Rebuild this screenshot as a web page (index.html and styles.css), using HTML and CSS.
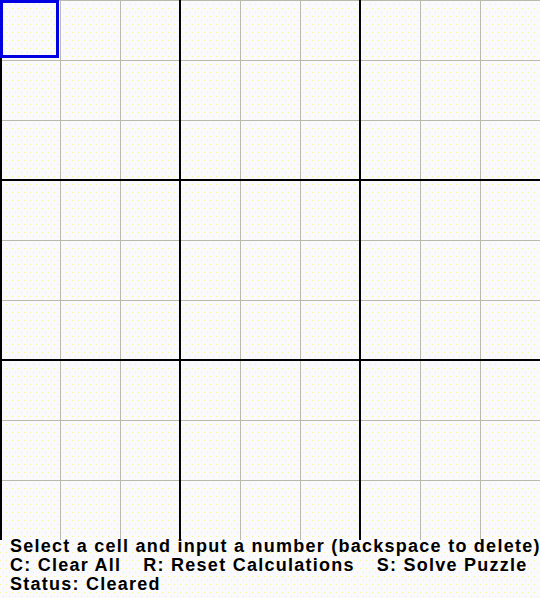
FILE: index.html
```html
<!DOCTYPE html>
<html>
<head>
<meta charset="utf-8">
<link rel="stylesheet" href="styles.css">
</head>
<body>
<div class="app">
  <div class="board">
    <div class="cell selected"></div>
  </div>
  <div class="info">
    <div class="line">Select a cell and input a number (backspace to delete)</div>
    <div class="line keys"><span>C: Clear All</span><span>R: Reset Calculations</span><span>S: Solve Puzzle</span></div>
    <div class="line">Status: Cleared</div>
  </div>
</div>
</body>
</html>
```
FILE: styles.css
```css
html, body {
  margin: 0;
  padding: 0;
}
body {
  width: 540px;
  height: 598px;
  overflow: hidden;
  background-color: #fafafd;
  background-image:
    conic-gradient(from 90deg at 1px 1px, transparent 0 50%, #f5f59a 50% 75%, transparent 75%),
    conic-gradient(from 90deg at 1px 1px, transparent 0 50%, #f5f59a 50% 75%, transparent 75%);
  background-size: 6px 8px, 6px 8px;
  background-position: 0 0, 3px 4px;
  font-family: "Liberation Sans", Arial, sans-serif;
}
.app {
  display: flex;
  flex-direction: column;
}
.board {
  width: 540px;
  height: 540px;
  display: grid;
  grid-template-columns: repeat(9, 60px);
  grid-template-rows: repeat(9, 60px);
  background-image:
    linear-gradient(to right, #000 0 2px, transparent 2px 179px, #000 179px 181px, transparent 181px 359px, #000 359px 361px, transparent 361px),
    linear-gradient(to bottom, transparent 0 179px, #000 179px 181px, transparent 181px 359px, #000 359px 361px, transparent 361px),
    linear-gradient(to right, #b9b9ac 1px, transparent 1px),
    linear-gradient(to bottom, #b9b9ac 1px, transparent 1px);
  background-size: 540px 540px, 540px 540px, 60px 60px, 60px 60px;
  background-position: 0 0, 0 0, 0 0, 0 0;
  background-repeat: no-repeat, no-repeat, repeat, repeat;
}
.cell.selected {
  width: 59px;
  height: 58px;
  box-sizing: border-box;
  border: 3px solid #0000e0;
}
.info {
  margin-top: -3px;
  padding-left: 10px;
  font-weight: bold;
  font-size: 18px;
  line-height: 19px;
  letter-spacing: 1.25px;
  color: #000;
  white-space: nowrap;
}
.keys {
  display: flex;
  gap: 22px;
}
```
